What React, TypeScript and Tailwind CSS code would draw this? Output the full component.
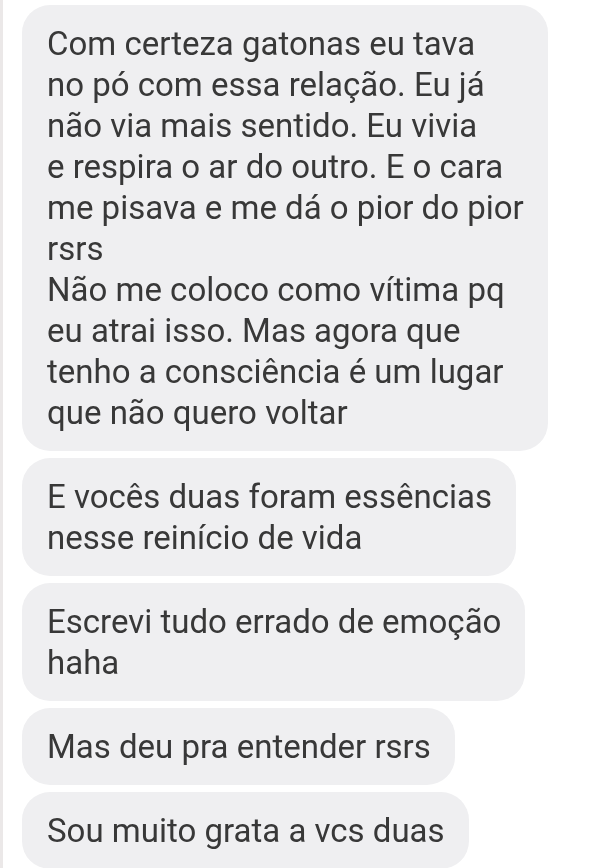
import React from 'react';

const messages: string[][] = [
  [
    'Com certeza gatonas eu tava',
    'no pó com essa relação. Eu já',
    'não via mais sentido. Eu vivia',
    'e respira o ar do outro. E o cara',
    'me pisava e me dá o pior do pior',
    'rsrs',
    'Não me coloco como vítima pq',
    'eu atrai isso. Mas agora que',
    'tenho a consciência é um lugar',
    'que não quero voltar',
  ],
  ['E vocês duas foram essências', 'nesse reinício de vida'],
  ['Escrevi tudo errado de emoção', 'haha'],
  ['Mas deu pra entender rsrs'],
  ['Sou muito grata a vcs duas'],
];

const Bubble: React.FC<{ lines: string[] }> = ({ lines }) => (
  <div className="bg-[#efeff1] rounded-[28px] pl-[25px] pr-[24px] py-[18px] text-[33px] leading-[41px] text-[#383838] blur-[0.5px]">
    {lines.map((l, i) => (
      <div key={i} className="whitespace-nowrap">{l}</div>
    ))}
  </div>
);

export default function App() {
  return (
    <div
      className="w-[604px] h-[868px] overflow-hidden bg-white border-l-[3px] border-[#ebe8e8]"
      style={{ fontFamily: 'Roboto, "Noto Sans", sans-serif' }}
    >
      <div className="flex flex-col items-start gap-[7px] pl-[19px] pt-[5px]">
        {messages.map((m, i) => (
          <Bubble key={i} lines={m} />
        ))}
      </div>
    </div>
  );
}
